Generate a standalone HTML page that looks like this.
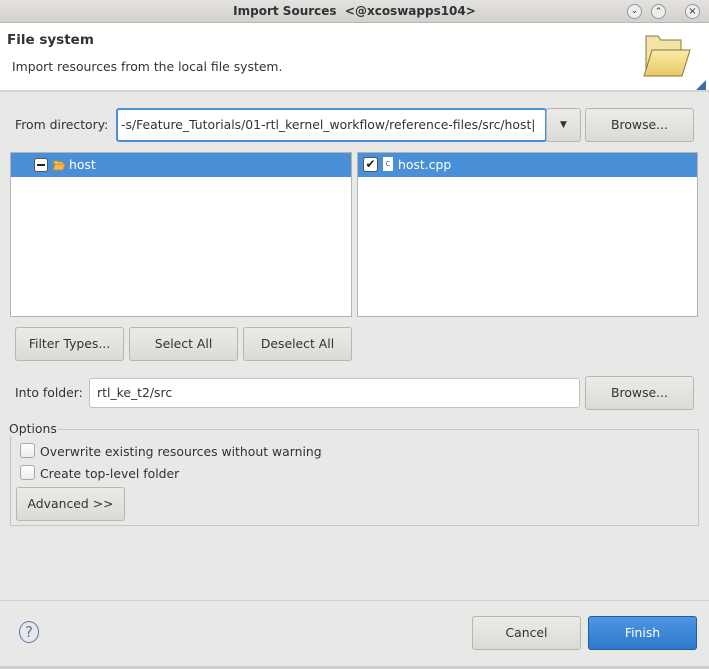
<!DOCTYPE html><html><head><style>
*{box-sizing:border-box;margin:0;padding:0}
body{width:709px;height:669px;background:#e8e8e7;font-family:"DejaVu Sans",sans-serif;font-size:12.4px;color:#2e3436;position:relative;overflow:hidden}
.a{position:absolute}
.btn{position:absolute;border:1px solid #b6b6b3;border-radius:3px;background:linear-gradient(#edebe9,#dcdad5);text-align:center;line-height:32px;color:#2e3436}
.inp{position:absolute;background:#fff;border:1px solid #c0c0bd;border-radius:3px}
.list{position:absolute;background:#fff;border:1px solid #b4b4b1}
.sel{position:absolute;left:0;right:0;top:0;height:24px;background:#4a90d9;color:#fff}
.cb{position:absolute;width:15px;height:15px;border:1px solid #a8a8a5;border-radius:3px;background:linear-gradient(#fff,#ececea)}
</style></head><body>
<div class="a" style="left:0;top:0;width:709px;height:23px;background:linear-gradient(#e4e2df,#d3d0cc);border-bottom:1px solid #bab7b3;text-align:center;font-weight:bold;line-height:23px;font-size:12px">Import Sources &nbsp;&lt;@xcoswapps104&gt;</div>
<div class="a" style="left:627px;top:4px;width:15px;height:15px;border-radius:50%;border:1px solid #9a9894;background:#eee;font-size:9px;line-height:13px;text-align:center">⌄</div>
<div class="a" style="left:651px;top:4px;width:15px;height:15px;border-radius:50%;border:1px solid #9a9894;background:#eee;font-size:9px;line-height:15px;text-align:center">⌃</div>
<div class="a" style="left:685px;top:4px;width:15px;height:15px;border-radius:50%;border:1px solid #9a9894;background:#eee;font-size:10px;line-height:13px;text-align:center">×</div>
<div class="a" style="left:0;top:23px;width:709px;height:69px;background:#fff;border-bottom:2px solid #d4d4d2"></div>
<div class="a" style="left:7px;top:32px;font-weight:bold;font-size:13.5px">File system</div>
<div class="a" style="left:12px;top:59px">Import resources from the local file system.</div>
<svg class="a" style="left:636px;top:28px" width="70" height="62"><defs><linearGradient id="g" x1="0" y1="0" x2="0" y2="1"><stop offset="0" stop-color="#fbeba8"/><stop offset="1" stop-color="#e8c862"/></linearGradient></defs><path d="M10 8h12l3 4h20v32H10z" fill="#f4e3a6" stroke="#8a7440"/><path d="M8 48l8-26h38l-8 26z" fill="url(#g)" stroke="#8a7440"/><path d="M60 62l10-10v10z" fill="#3a6ea5"/></svg>
<div class="a" style="left:15px;top:117px">From directory:</div>
<div class="inp" style="left:116px;top:108px;width:431px;height:34px;border:2px solid #4a90d9;line-height:30px;padding-left:3px;white-space:nowrap;overflow:hidden">‑s/Feature_Tutorials/01-rtl_kernel_workflow/reference-files/src/host|</div>
<div class="btn" style="left:546px;top:108px;width:35px;height:34px;font-size:9px">▼</div>
<div class="btn" style="left:585px;top:108px;width:109px;height:34px">Browse...</div>
<div class="list" style="left:10px;top:152px;width:342px;height:165px"><div class="sel"><div class="a" style="left:23px;top:5px;width:14px;height:14px;background:#fff;border:1px solid #555;border-radius:3px"><div style="margin:5px 2px;height:2px;background:#222"></div></div><svg class="a" style="left:41px;top:6px" width="14" height="12"><path d="M1 2h4l1 1h5v2H3z" fill="#f6d58a" stroke="#c98a1e"/><path d="M1 11l2-6h10l-2 6z" fill="#f2b94e" stroke="#c98a1e"/></svg><span class="a" style="left:58px;top:4px">host</span></div></div>
<div class="list" style="left:357px;top:152px;width:341px;height:165px"><div class="sel"><div class="a" style="left:5px;top:4px;width:15px;height:15px;background:#fff;border:1px solid #555;border-radius:3px;color:#222;font-size:12px;line-height:13px;text-align:center">✔</div><div class="a" style="left:25px;top:4px;width:10px;height:14px;background:#fff;color:#3a6ea5;font-size:9px;line-height:14px;text-align:center">c</div><span class="a" style="left:40px;top:4px">host.cpp</span></div></div>
<div class="btn" style="left:15px;top:327px;width:109px;height:34px">Filter Types...</div>
<div class="btn" style="left:129px;top:327px;width:109px;height:34px">Select All</div>
<div class="btn" style="left:243px;top:327px;width:109px;height:34px">Deselect All</div>
<div class="a" style="left:15px;top:385px">Into folder:</div>
<div class="inp" style="left:89px;top:378px;width:491px;height:30px;line-height:28px;padding-left:7px">rtl_ke_t2/src</div>
<div class="btn" style="left:585px;top:376px;width:109px;height:34px">Browse...</div>
<div class="a" style="left:10px;top:429px;width:689px;height:97px;border:1px solid #c4c4c1"></div>
<div class="a" style="left:9px;top:421px;background:#e8e8e7;padding-right:1px">Options</div>
<div class="cb" style="left:20px;top:443px"></div><div class="a" style="left:40px;top:444px">Overwrite existing resources without warning</div>
<div class="cb" style="left:20px;top:465px"></div><div class="a" style="left:40px;top:466px">Create top-level folder</div>
<div class="btn" style="left:16px;top:487px;width:109px;height:34px">Advanced &gt;&gt;</div>
<div class="a" style="left:0;top:600px;width:709px;height:1px;background:#d0d0ce"></div>
<div class="a" style="left:19px;top:621px;width:20px;height:22px;border:1.5px solid #5a78a8;border-radius:50%;color:#5a78a8;text-align:center;line-height:20px;font-size:15px">?</div>
<div class="btn" style="left:472px;top:616px;width:109px;height:34px">Cancel</div>
<div class="btn" style="left:588px;top:616px;width:109px;height:34px;background:linear-gradient(#4f96e0,#2f79cc);border-color:#1f5fa8;color:#fff">Finish</div>
<div class="a" style="left:0;top:666px;width:709px;height:3px;background:#cfcfcd"></div>
</body></html>
